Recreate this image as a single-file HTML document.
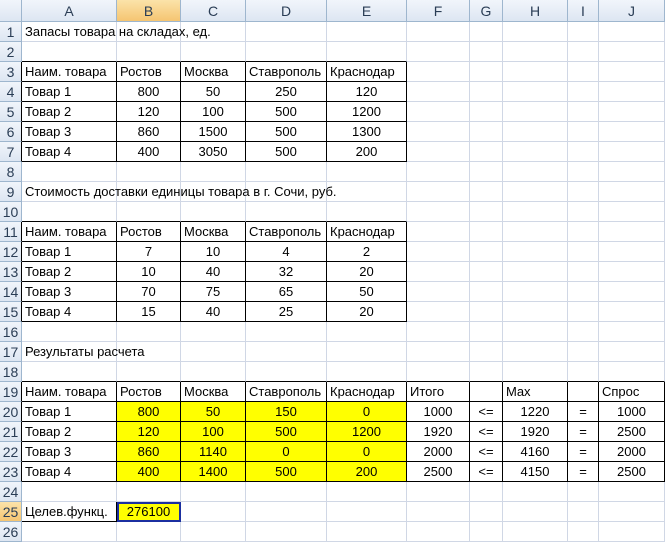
<!DOCTYPE html>
<html><head><meta charset="utf-8"><style>
body{margin:0;background:#fff;width:665px;height:527px;overflow:hidden;font-family:"Liberation Sans",sans-serif;font-size:13px}
table{border-collapse:separate;border-spacing:0;table-layout:fixed;width:665px}
td{padding:1px 0 0 3px;height:18px;border-right:1px solid #d0d7e5;border-bottom:1px solid #d0d7e5;white-space:nowrap;overflow:visible;line-height:18px;box-sizing:content-box}
td.h{background:linear-gradient(#f1f5fb,#dde6f2);color:#2a3d55;text-align:center;border-right:1px solid #9eb6ce;border-bottom:1px solid #9eb6ce;padding:1px 0 0 0;font-size:14px}
tr.top td{height:20px;line-height:20px}
td.s{background:linear-gradient(#fbe3a9,#f5c572);color:#2a3d55}
.c{text-align:center;padding-left:0!important}
.k{border-right-color:#000!important;border-bottom-color:#000!important}
.br{border-right-color:#000!important}
.bb{border-bottom-color:#000!important}
.y{background:#ff0}
.sel{outline:2px solid #1b2fa0;outline-offset:-2px;position:relative}
</style></head><body>
<table>
<colgroup><col style="width:22px"><col style="width:95px"><col style="width:64px"><col style="width:65px"><col style="width:81px"><col style="width:80px"><col style="width:63px"><col style="width:33px"><col style="width:65px"><col style="width:31px"><col style="width:66px"></colgroup>
<tr class="top"><td class="h"></td><td class="h">A</td><td class="h s">B</td><td class="h">C</td><td class="h">D</td><td class="h">E</td><td class="h">F</td><td class="h">G</td><td class="h">H</td><td class="h">I</td><td class="h">J</td></tr>
<tr><td class="h">1</td><td>Запасы товара на складах, ед.</td><td></td><td></td><td></td><td></td><td></td><td></td><td></td><td></td><td></td></tr>
<tr><td class="h">2</td><td class="bb"></td><td class="bb"></td><td class="bb"></td><td class="bb"></td><td class="bb"></td><td></td><td></td><td></td><td></td><td></td></tr>
<tr><td class="h br">3</td><td class="k">Наим. товара</td><td class="k">Ростов</td><td class="k">Москва</td><td class="k">Ставрополь</td><td class="k">Краснодар</td><td></td><td></td><td></td><td></td><td></td></tr>
<tr><td class="h br">4</td><td class="k">Товар 1</td><td class="k c">800</td><td class="k c">50</td><td class="k c">250</td><td class="k c">120</td><td></td><td></td><td></td><td></td><td></td></tr>
<tr><td class="h br">5</td><td class="k">Товар 2</td><td class="k c">120</td><td class="k c">100</td><td class="k c">500</td><td class="k c">1200</td><td></td><td></td><td></td><td></td><td></td></tr>
<tr><td class="h br">6</td><td class="k">Товар 3</td><td class="k c">860</td><td class="k c">1500</td><td class="k c">500</td><td class="k c">1300</td><td></td><td></td><td></td><td></td><td></td></tr>
<tr><td class="h br">7</td><td class="k">Товар 4</td><td class="k c">400</td><td class="k c">3050</td><td class="k c">500</td><td class="k c">200</td><td></td><td></td><td></td><td></td><td></td></tr>
<tr><td class="h">8</td><td></td><td></td><td></td><td></td><td></td><td></td><td></td><td></td><td></td><td></td></tr>
<tr><td class="h">9</td><td>Стоимость доставки единицы товара в г. Сочи, руб.</td><td></td><td></td><td></td><td></td><td></td><td></td><td></td><td></td><td></td></tr>
<tr><td class="h">10</td><td class="bb"></td><td class="bb"></td><td class="bb"></td><td class="bb"></td><td class="bb"></td><td></td><td></td><td></td><td></td><td></td></tr>
<tr><td class="h br">11</td><td class="k">Наим. товара</td><td class="k">Ростов</td><td class="k">Москва</td><td class="k">Ставрополь</td><td class="k">Краснодар</td><td></td><td></td><td></td><td></td><td></td></tr>
<tr><td class="h br">12</td><td class="k">Товар 1</td><td class="k c">7</td><td class="k c">10</td><td class="k c">4</td><td class="k c">2</td><td></td><td></td><td></td><td></td><td></td></tr>
<tr><td class="h br">13</td><td class="k">Товар 2</td><td class="k c">10</td><td class="k c">40</td><td class="k c">32</td><td class="k c">20</td><td></td><td></td><td></td><td></td><td></td></tr>
<tr><td class="h br">14</td><td class="k">Товар 3</td><td class="k c">70</td><td class="k c">75</td><td class="k c">65</td><td class="k c">50</td><td></td><td></td><td></td><td></td><td></td></tr>
<tr><td class="h br">15</td><td class="k">Товар 4</td><td class="k c">15</td><td class="k c">40</td><td class="k c">25</td><td class="k c">20</td><td></td><td></td><td></td><td></td><td></td></tr>
<tr><td class="h">16</td><td></td><td></td><td></td><td></td><td></td><td></td><td></td><td></td><td></td><td></td></tr>
<tr><td class="h">17</td><td>Результаты расчета</td><td></td><td></td><td></td><td></td><td></td><td></td><td></td><td></td><td></td></tr>
<tr><td class="h">18</td><td class="bb"></td><td class="bb"></td><td class="bb"></td><td class="bb"></td><td class="bb"></td><td class="bb"></td><td class="bb"></td><td class="bb"></td><td class="bb"></td><td class="bb"></td></tr>
<tr><td class="h br">19</td><td class="k">Наим. товара</td><td class="k">Ростов</td><td class="k">Москва</td><td class="k">Ставрополь</td><td class="k">Краснодар</td><td class="k">Итого</td><td class="k"></td><td class="k">Max</td><td class="k"></td><td class="k">Спрос</td></tr>
<tr><td class="h br">20</td><td class="k">Товар 1</td><td class="k c y">800</td><td class="k c y">50</td><td class="k c y">150</td><td class="k c y">0</td><td class="k c">1000</td><td class="k c">&lt;=</td><td class="k c">1220</td><td class="k c">=</td><td class="k c">1000</td></tr>
<tr><td class="h br">21</td><td class="k">Товар 2</td><td class="k c y">120</td><td class="k c y">100</td><td class="k c y">500</td><td class="k c y">1200</td><td class="k c">1920</td><td class="k c">&lt;=</td><td class="k c">1920</td><td class="k c">=</td><td class="k c">2500</td></tr>
<tr><td class="h br">22</td><td class="k">Товар 3</td><td class="k c y">860</td><td class="k c y">1140</td><td class="k c y">0</td><td class="k c y">0</td><td class="k c">2000</td><td class="k c">&lt;=</td><td class="k c">4160</td><td class="k c">=</td><td class="k c">2000</td></tr>
<tr><td class="h br">23</td><td class="k">Товар 4</td><td class="k c y">400</td><td class="k c y">1400</td><td class="k c y">500</td><td class="k c y">200</td><td class="k c">2500</td><td class="k c">&lt;=</td><td class="k c">4150</td><td class="k c">=</td><td class="k c">2500</td></tr>
<tr><td class="h">24</td><td></td><td></td><td></td><td></td><td></td><td></td><td></td><td></td><td></td><td></td></tr>
<tr><td class="h s">25</td><td class="br bb">Целев.функц.</td><td class="k c y sel">276100</td><td></td><td></td><td></td><td></td><td></td><td></td><td></td><td></td></tr>
<tr><td class="h">26</td><td></td><td></td><td></td><td></td><td></td><td></td><td></td><td></td><td></td><td></td></tr>
</table>
</body></html>
